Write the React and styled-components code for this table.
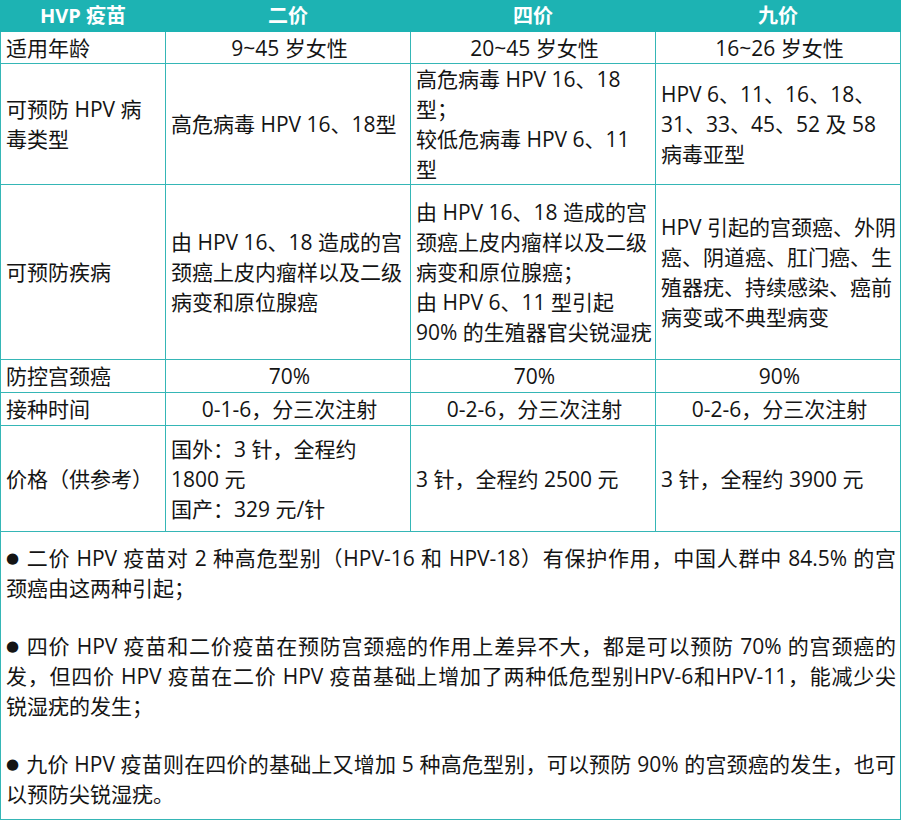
import React from "react";
import styled, { createGlobalStyle } from "styled-components";

const rows = [
    {
        label: "适用年龄",
        height: 32,
        center: true,
        cells: [["9~45 岁女性"], ["20~45 岁女性"], ["16~26 岁女性"]]
    },
    {
        label: ["可预防 HPV 病", "毒类型"],
        height: 121,
        cells: [
            ["高危病毒 HPV 16、18型"],
            ["高危病毒 HPV 16、18", "型；", "较低危病毒 HPV 6、11", "型"],
            ["HPV 6、11、16、18、", "31、33、45、52 及 58", "病毒亚型"]
        ]
    },
    {
        label: "可预防疾病",
        height: 175,
        cells: [
            ["由 HPV 16、18 造成的宫", "颈癌上皮内瘤样以及二级", "病变和原位腺癌"],
            ["由 HPV 16、18 造成的宫", "颈癌上皮内瘤样以及二级", "病变和原位腺癌；", "由 HPV 6、11 型引起", "90% 的生殖器官尖锐湿疣"],
            ["HPV 引起的宫颈癌、外阴", "癌、阴道癌、肛门癌、生", "殖器疣、持续感染、癌前", "病变或不典型病变"]
        ]
    },
    {
        label: "防控宫颈癌",
        height: 33,
        center: true,
        cells: [["70%"], ["70%"], ["90%"]]
    },
    {
        label: "接种时间",
        height: 33,
        center: true,
        cells: [["0-1-6，分三次注射"], ["0-2-6，分三次注射"], ["0-2-6，分三次注射"]]
    },
    {
        label: "价格（供参考）",
        height: 106,
        cells: [
            ["国外：3 针，全程约", "1800 元", "国产：329 元/针"],
            ["3 针，全程约 2500 元"],
            ["3 针，全程约 3900 元"]
        ]
    }
];

// each note is split where the original wraps; wrapped lines are justified
const notes = [
    ["二价 HPV 疫苗对 2 种高危型别（HPV-16 和 HPV-18）有保护作用，中国人群中 84.5% 的宫", "颈癌由这两种引起；"],
    ["四价 HPV 疫苗和二价疫苗在预防宫颈癌的作用上差异不大，都是可以预防 70% 的宫颈癌的", "发，但四价 HPV 疫苗在二价 HPV 疫苗基础上增加了两种低危型别HPV-6和HPV-11，能减少尖", "锐湿疣的发生；"],
    ["九价 HPV 疫苗则在四价的基础上又增加 5 种高危型别，可以预防 90% 的宫颈癌的发生，也可", "以预防尖锐湿疣。"]
];

function Lines({ lines }) {
    const list = Array.isArray(lines) ? lines : [lines];
    return list.map((l, i) => (
        <React.Fragment key={i}>
            {i > 0 && <br />}
            {l}
        </React.Fragment>
    ));
}

export default function App() {
    return (
        <>
            <GlobalStyle />
            <Table>
                <colgroup>
                    <col style={{ width: 165 }} />
                    <col style={{ width: 245 }} />
                    <col style={{ width: 245 }} />
                    <col style={{ width: 245 }} />
                </colgroup>
                <thead>
                    <tr>
                        <HeadCell>HVP 疫苗</HeadCell>
                        <HeadCell>二价</HeadCell>
                        <HeadCell>四价</HeadCell>
                        <HeadCell>九价</HeadCell>
                    </tr>
                </thead>
                <tbody>
                    {rows.map((row, i) => (
                        <Row key={i} $h={row.height}>
                            <LabelCell><Lines lines={row.label} /></LabelCell>
                            {row.cells.map((c, j) => (
                                <ValueCell key={j} $center={row.center}>
                                    <Lines lines={c} />
                                </ValueCell>
                            ))}
                        </Row>
                    ))}
                    <Row $h={288}>
                        <NoteCell colSpan={4}>
                            {notes.map((n, i) => (
                                <Note key={i}>
                                    {n.map((line, j) => (
                                        <NoteLine key={j} $justify={j < n.length - 1}>
                                            {j === 0 && <Bullet>●</Bullet>}
                                            {line}
                                        </NoteLine>
                                    ))}
                                </Note>
                            ))}
                        </NoteCell>
                    </Row>
                </tbody>
            </Table>
        </>
    );
}

const GlobalStyle = createGlobalStyle`
    body {
        margin: 0;
        background: #ffffff;
        font-family: "Open Sans", "Noto Sans CJK SC", sans-serif;
        color: #141414;
    }
`

const Table = styled.table`
    width: 900px;
    border-collapse: collapse;
    table-layout: fixed;
    font-size: 21px;
    line-height: 30px;
`

const HeadCell = styled.th`
    height: 30px;
    padding: 0;
    background-color: #1db3b3;
    border: 1px solid #1db3b3;
    color: #ffffff;
    font-size: 20px;
    font-weight: 700;
    line-height: 28px;
    text-align: center;
`

const Row = styled.tr`
    height: ${(p) => p.$h}px;
`

const LabelCell = styled.td`
    padding: 0 2px 0 5px;
    border: 1px solid #35b6b6;
    vertical-align: middle;
    text-align: left;
    white-space: nowrap;
`

const ValueCell = styled.td`
    padding: 0 2px 0 5px;
    border: 1px solid #35b6b6;
    vertical-align: middle;
    text-align: ${(p) => (p.$center ? "center" : "left")};
    white-space: nowrap;
`

const NoteCell = styled.td`
    padding: 0 4px 0 5px;
    border: 1px solid #35b6b6;
    vertical-align: middle;
`

const Note = styled.div`
    & + & {
        margin-top: 28px;
    }
`

const NoteLine = styled.div`
    white-space: nowrap;
    text-align: ${(p) => (p.$justify ? "justify" : "left")};
    text-align-last: ${(p) => (p.$justify ? "justify" : "left")};
    text-justify: inter-character;
`

const Bullet = styled.span`
    display: inline-block;
    width: 20px;
    font-family: "DejaVu Sans", sans-serif;
    font-size: 15px;
    vertical-align: top;
`
